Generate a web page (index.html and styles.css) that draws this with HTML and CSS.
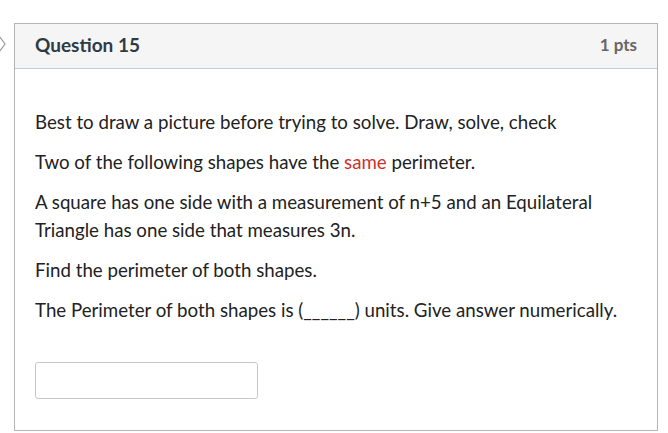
FILE: index.html
```html
<!DOCTYPE html>
<html>
<head>
<meta charset="utf-8">
<link rel="stylesheet" href="styles.css">
</head>
<body>
<div class="page">
  <svg class="chev" width="8" height="20" viewBox="0 0 8 20"><path d="M0 2 L6 10 L0 18" fill="none" stroke="#9a9a9a" stroke-width="1.2"/></svg>
  <div class="card">
    <div class="header">
      <span class="title">Question 15</span>
      <span class="pts">1 pts</span>
    </div>
    <div class="body">
      <p>Best to draw a picture before trying to solve. Draw, solve, check</p>
      <p>Two of the following shapes have the <span class="red">same</span> perimeter.</p>
      <p>A square has one side with a measurement of n+5 and an Equilateral Triangle has one side that measures 3n.</p>
      <p>Find the perimeter of both shapes.</p>
      <p>The Perimeter of both shapes is (______) units. Give answer numerically.</p>
      <div class="answer"><input class="input" type="text"></div>
    </div>
  </div>
</div>
</body>
</html>
```
FILE: styles.css
```css
html, body { margin: 0; padding: 0; background: #fff; }
body { font-family: Lato, "Liberation Sans", sans-serif; color: #2d3b45; }
.page { position: relative; padding: 23px 10px 0 14px; }
.chev { position: absolute; left: -1px; top: 34px; }
.card { border: 1px solid #b5b5b5; height: 408px; box-sizing: border-box; }
.header { height: 45px; background: #f5f5f5; border-bottom: 1px solid #c7cdd1; display: flex; align-items: center; justify-content: space-between; padding: 0 20px 4px 20px; box-sizing: border-box; }
.title { font-weight: bold; font-size: 19px; color: #2d3b45; }
.pts { font-weight: bold; font-size: 17px; color: #666; }
.body { padding: 39px 20px 0 20px; }
.body p { margin: 0 0 12px 0; font-size: 18.7px; line-height: 28px; color: #222; }
.red { color: #d0312d; }
.answer { padding-top: 26px; }
.input { width: 223px; height: 37px; box-sizing: border-box; border: 1px solid #c7c7c7; border-radius: 3px; background: #fff; margin: 0; padding: 0; display: block; }
```
